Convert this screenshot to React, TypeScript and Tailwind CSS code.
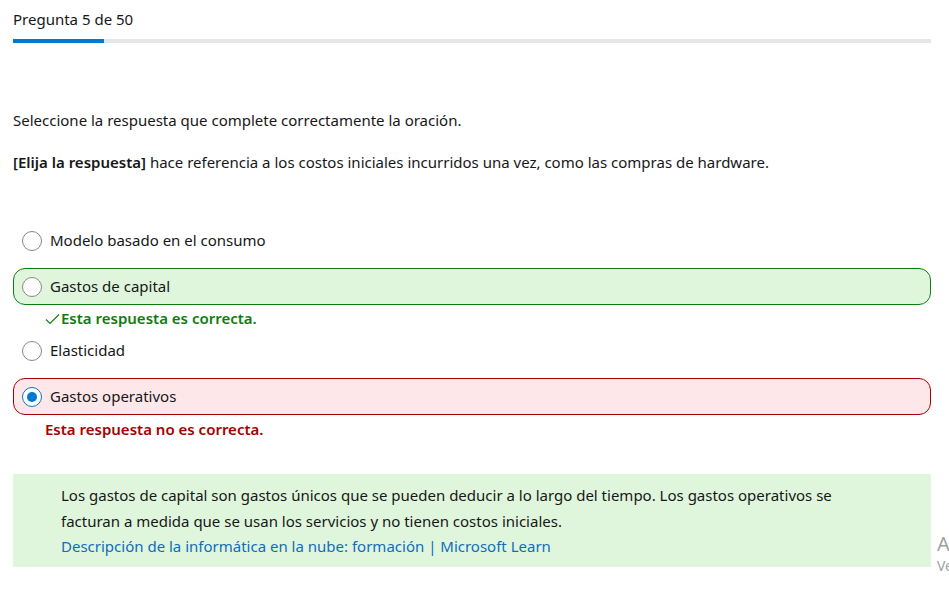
import React from "react";

const options = [
    { label: "Modelo basado en el consumo", state: "none" },
    { label: "Gastos de capital", state: "correct" },
    { label: "Elasticidad", state: "none" },
    { label: "Gastos operativos", state: "wrong" },
];

function Radio({ checked }: { checked?: boolean }) {
    return (
        <span
            className={`flex h-[20px] w-[20px] shrink-0 items-center justify-center rounded-full border bg-white ${
                checked ? "border-[#0078d4]" : "border-[#8a8886]"
            }`}
        >
            {checked && <span className="h-[10px] w-[10px] rounded-full bg-[#0078d4]" />}
        </span>
    );
}

export default function App() {
    return (
        <main className="relative h-[601px] w-[949px] overflow-hidden bg-white text-[#171717] font-['Segoe_UI','Noto_Sans',sans-serif]">
            <div className="pl-[13px] pr-[18px] pt-[9px]">
                <p className="text-[15px] leading-[21px]">Pregunta 5 de 50</p>
                <div className="mt-[9px] h-[4px] w-full bg-[#e6e6e6]">
                    <div className="h-full w-[91px] bg-[#0078d4]" />
                </div>

                <p className="mt-[66px] text-[15px] leading-[22px]">
                    Seleccione la respuesta que complete correctamente la oración.
                </p>
                <p className="mt-[20px] text-[15px] leading-[22px]">
                    <span className="font-semibold">[Elija la respuesta]</span> hace referencia a los costos
                    iniciales incurridos una vez, como las compras de hardware.
                </p>

                <div className="mt-[49px] flex flex-col">
                    {options.map((o, i) => (
                        <div key={i} className={o.state === "none" ? "mb-[9px]" : ""}>
                            <label
                                className={`flex h-[37px] items-center gap-[8px] rounded-[12px] border pl-[8px] text-[15px] ${
                                    o.state === "correct"
                                        ? "border-[#107c10] bg-[#dff6dd]"
                                        : o.state === "wrong"
                                        ? "border-[#a80000] bg-[#fde7e9]"
                                        : "border-transparent"
                                }`}
                            >
                                <Radio checked={o.state === "wrong"} />
                                <span>{o.label}</span>
                            </label>
                            {o.state === "correct" && (
                                <p className="flex h-[27px] items-center pl-[32px] text-[15px] font-semibold text-[#107c10]">
                                    <svg width="15" height="12" viewBox="0 0 15 12" className="mr-[1px]">
                                        <path d="M1 6.5 L5 10.5 L14 1.5" fill="none" stroke="#107c10" strokeWidth="1.1" />
                                    </svg>
                                    Esta respuesta es correcta.
                                </p>
                            )}
                            {o.state === "wrong" && (
                                <p className="flex h-[29px] items-center pl-[32px] text-[15px] font-semibold text-[#a80000]">
                                    Esta respuesta no es correcta.
                                </p>
                            )}
                        </div>
                    ))}
                </div>

                <div className="mt-[30px] bg-[#dff6dd] pb-[7px] pl-[48px] pr-[40px] pt-[9px] text-[15px] leading-[25.5px]">
                    <p>
                        Los gastos de capital son gastos únicos que se pueden deducir a lo largo del tiempo. Los
                        gastos operativos se facturan a medida que se usan los servicios y no tienen costos
                        iniciales.
                    </p>
                    <a href="#" className="text-[#0f6cbd]">
                        Descripción de la informática en la nube: formación | Microsoft Learn
                    </a>
                </div>
            </div>

            <div className="absolute left-[937px] top-[531px] whitespace-nowrap text-[#a0a0a0]">
                <p className="text-[20px] leading-[26px]">Activar Windows</p>
                <p className="text-[14px] leading-[18px]">Ve a Configuración</p>
            </div>
        </main>
    );
}
